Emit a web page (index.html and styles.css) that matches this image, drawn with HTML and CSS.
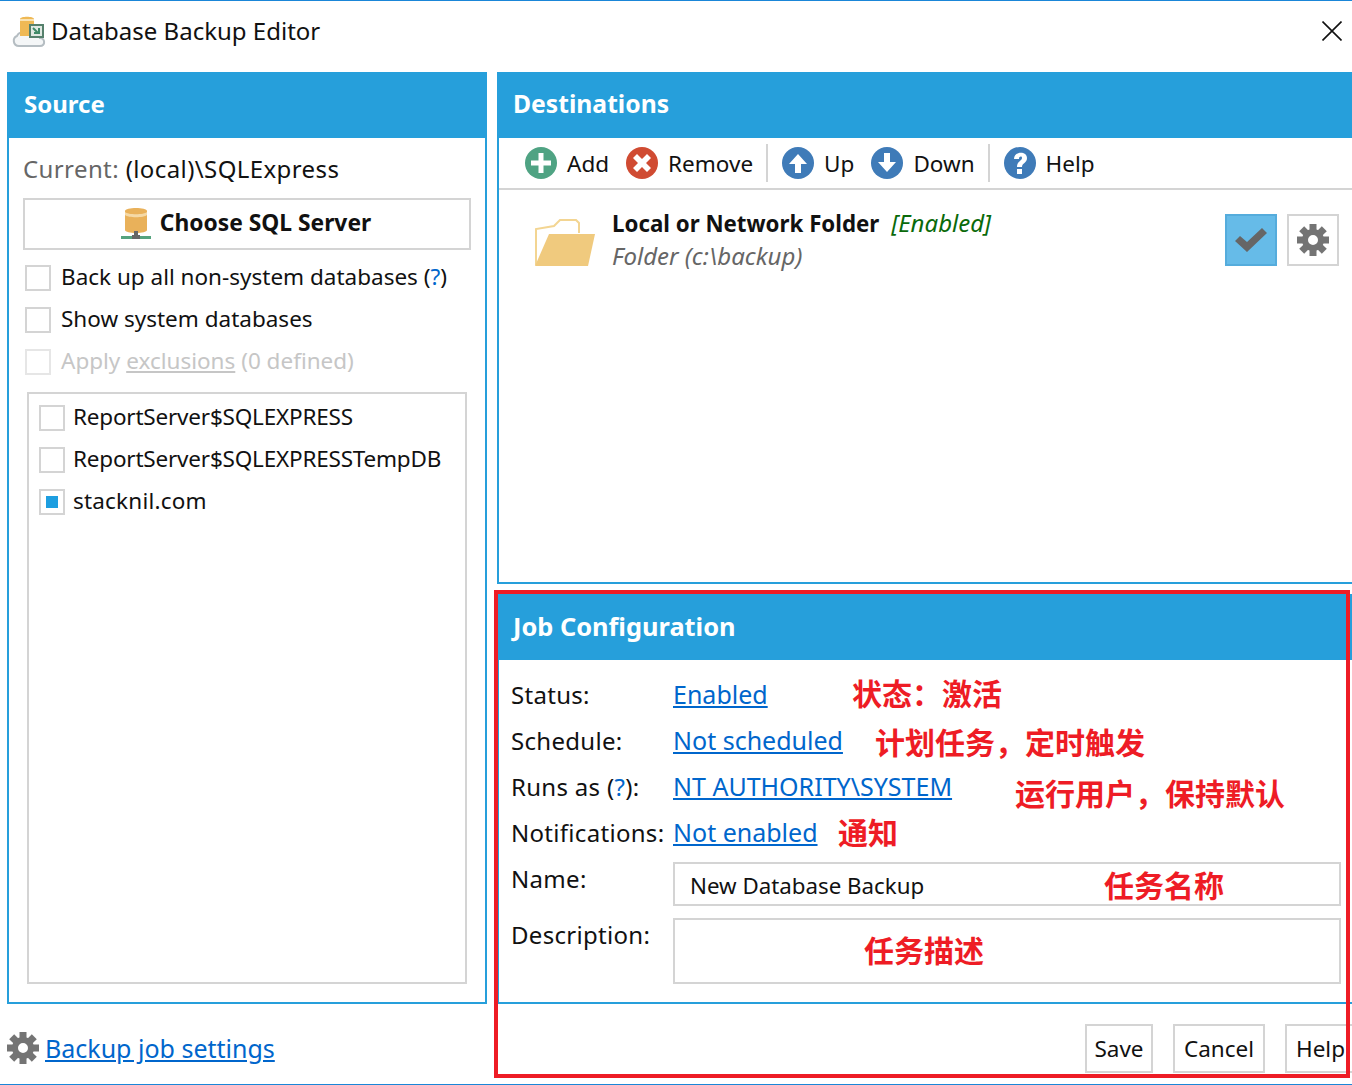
FILE: index.html
```html
<!doctype html>
<html lang="en">
<head>
  <meta charset="utf-8">
  <title>Database Backup Editor</title>
  <link rel="stylesheet" href="styles.css">
</head>
<body>
  <svg class="defs" width="0" height="0">
    <symbol id="gear" viewBox="0 0 32 32">
      <circle cx="16" cy="16" r="8" fill="none" stroke="currentColor" stroke-width="6"/>
      <rect x="12.500" y="0" width="7" height="7" fill="currentColor"/>
      <rect x="12.500" y="25" width="7" height="7" fill="currentColor"/>
      <rect x="0" y="12.500" width="7" height="7" fill="currentColor"/>
      <rect x="25" y="12.500" width="7" height="7" fill="currentColor"/>
      <rect x="12.500" y="0" width="7" height="7" fill="currentColor" transform="rotate(45 16 16)"/>
      <rect x="12.500" y="25" width="7" height="7" fill="currentColor" transform="rotate(45 16 16)"/>
      <rect x="0" y="12.500" width="7" height="7" fill="currentColor" transform="rotate(45 16 16)"/>
      <rect x="25" y="12.500" width="7" height="7" fill="currentColor" transform="rotate(45 16 16)"/>
    </symbol>
    <symbol id="db" viewBox="0 0 30 34">
      <path fill="#e9b15a" d="M4 4c0-4 22-4 22 0v19c0 4-22 4-22 0z"/>
      <path fill="#f5d9a6" d="M4 5c3 3 19 3 22 0v3c-3 3-19 3-22 0z"/>
      <rect x="13" y="24" width="4" height="6" fill="#666"/>
      <rect x="0" y="29" width="30" height="3" fill="#55a37e"/>
      <rect x="11" y="28" width="8" height="4" fill="#666"/>
    </symbol>
  </svg>

  <div class="window">
    <header class="titlebar">
      <svg class="app-icon" viewBox="0 0 34 32">
        <path fill="#f4f6f7" stroke="#b5bdc2" stroke-width="2" d="M7 30C1 30 0 22 5 20 7 15 15 15 18 18 23 16 28 18 28 22 33 22 34 30 28 30z"/>
        <path fill="#efb955" d="M8 3c0-3 14-3 14 0v17H8z"/>
        <rect x="8" y="3" width="14" height="2" fill="#f9e3b4"/>
        <rect x="18" y="9" width="13" height="12" fill="#dfe8e2" stroke="#55806c" stroke-width="2"/>
        <path fill="none" stroke="#3f8a68" stroke-width="2" d="M21 12l5 5M27 12v5h-5"/>
      </svg>
      <span class="app-title">Database Backup Editor</span>
      <svg class="close" viewBox="0 0 20 20"><path fill="none" stroke="#111" stroke-width="1.600" d="M0.500 0.500l19 19M19.500 0.500l-19 19"/></svg>
    </header>

    <div class="columns">
      <section class="panel source">
        <h2 class="panel-head">Source</h2>
        <div class="source-body">
          <div class="current"><span class="muted">Current:</span> (local)\SQLExpress</div>
          <button class="choose"><svg class="choose-icon"><use href="#db"/></svg>Choose SQL Server</button>
          <label class="check-row"><span class="box"></span>Back up all non-system databases (<span class="hint">?</span>)</label>
          <label class="check-row"><span class="box"></span>Show system databases</label>
          <label class="check-row disabled"><span class="box"></span>Apply&nbsp;<u>exclusions</u>&nbsp;(0 defined)</label>
          <div class="db-list">
            <label class="check-row caps"><span class="box"></span>ReportServer$SQLEXPRESS</label>
            <label class="check-row caps"><span class="box"></span>ReportServer$SQLEXPRESSTempDB</label>
            <label class="check-row wide"><span class="box on"></span>stacknil.com</label>
          </div>
        </div>
      </section>

      <div class="right">
        <section class="panel destinations">
          <h2 class="panel-head">Destinations</h2>
          <div class="toolbar">
            <span class="tool">
              <svg viewBox="0 0 32 32"><circle cx="16" cy="16" r="16" fill="#4fa383"/><path fill="#fff" d="M13.500 6h5v7.500H26v5h-7.500V26h-5v-7.500H6v-5h7.500z"/></svg>Add
            </span>
            <span class="tool">
              <svg viewBox="0 0 32 32"><circle cx="16" cy="16" r="16" fill="#d04b32"/><path fill="#fff" d="M11 7l5 5 5-5 4 4-5 5 5 5-4 4-5-5-5 5-4-4 5-5-5-5z"/></svg>Remove
            </span>
            <span class="tool-sep"></span>
            <span class="tool">
              <svg viewBox="0 0 32 32"><circle cx="16" cy="16" r="16" fill="#3f7bb8"/><path fill="#fff" d="M16 7l9 10h-6v9h-6v-9H7z"/></svg>Up
            </span>
            <span class="tool">
              <svg viewBox="0 0 32 32"><circle cx="16" cy="16" r="16" fill="#3f7bb8"/><path fill="#fff" d="M16 25l-9-10h6V6h6v9h6z"/></svg>Down
            </span>
            <span class="tool-sep"></span>
            <span class="tool">
              <svg viewBox="0 0 32 32"><circle cx="16" cy="16" r="16" fill="#3f7bb8"/><path fill="#fff" d="M10 12c0-8 13-8 13-1 0 5-5 5-5 9h-5c0-6 5-6 5-9 0-2-3-2-3 1zM13 22h5v5h-5z"/></svg>Help
            </span>
          </div>
          <div class="dest-row">
            <svg class="folder" viewBox="0 0 60 48">
              <path fill="none" stroke="#f3d592" stroke-width="2" d="M1 47V11l18-3 6-6h16l3 3v10"/>
              <path fill="#f0ca7e" d="M14 16h46l-7 32H0z"/>
            </svg>
            <div class="dest-text">
              <div><b>Local or Network Folder</b><i class="enabled">[Enabled]</i></div>
              <i class="dest-sub">Folder (c:\backup)</i>
            </div>
            <span class="square checked">
              <svg viewBox="0 0 32 24"><path fill="#666" d="M0 13l5-5 7 6L27 0l5 5-20 19z"/></svg>
            </span>
            <span class="square">
              <svg class="gear"><use href="#gear"/></svg>
            </span>
          </div>
        </section>

        <section class="panel job">
          <h2 class="panel-head">Job Configuration</h2>
          <div class="job-grid">
            <div class="job-label">Status:</div><div class="job-value"><a href="#">Enabled</a></div>
            <div class="job-label">Schedule:</div><div class="job-value"><a href="#">Not scheduled</a></div>
            <div class="job-label">Runs as (<span class="hint">?</span>):</div><div class="job-value"><a href="#">NT AUTHORITY\SYSTEM</a></div>
            <div class="job-label">Notifications:</div><div class="job-value"><a href="#">Not enabled</a></div>
            <div class="job-label field-label">Name:</div><div class="field name">New Database Backup</div>
            <div class="job-label field-label">Description:</div><div class="field desc"></div>
          </div>
        </section>
      </div>
    </div>

    <footer class="bottom">
      <div class="settings">
        <svg class="gear"><use href="#gear"/></svg>
        <a href="#">Backup job settings</a>
      </div>
      <div class="actions">
        <button class="btn save">Save</button>
        <button class="btn cancel">Cancel</button>
        <button class="btn help">Help</button>
      </div>
    </footer>

    <!-- red markup painted over the screenshot -->
    <div class="mark-box"></div>
    <span class="note n1">状态：激活</span>
    <span class="note n2">计划任务，定时触发</span>
    <span class="note n3">运行用户，保持默认</span>
    <span class="note n4">通知</span>
    <span class="note n5">任务名称</span>
    <span class="note n6">任务描述</span>
  </div>
</body>
</html>
```

FILE: styles.css
```css
* {
  box-sizing: border-box;
}

html, body {
  margin: 0;
  overflow: hidden;
}

body {
  background: #fff;
  color: #111;
  font-family: "Noto Sans", "Noto Sans CJK SC", sans-serif;
  font-size: 24px;
}

.defs {
  position: absolute;
}

.window {
  position: relative;
  width: 1352px;
  height: 1085px;
  overflow: hidden;
  border-top: 1px solid #1a86d8;
  border-bottom: 1px solid #1a86d8;
}

.titlebar {
  display: flex;
  align-items: center;
  height: 71px;
  padding: 0 10px 12px 12px;
}

.app-icon {
  width: 34px;
  height: 32px;
  margin: 3px 5px 0 0;
}

.app-title {
  font-size: 24px;
}

.close {
  width: 20px;
  height: 20px;
  margin-left: auto;
}

.columns {
  display: flex;
  gap: 10px;
  height: 932px;
  padding-left: 7px;
}

.panel {
  display: flex;
  flex-direction: column;
  border: 2px solid #269fdb;
}

.panel-head {
  height: 66px;
  margin: -2px -2px 0;
  padding-left: 17px;
  background: #269fdb;
  color: #fff;
  font-size: 24.700px;
  font-weight: 700;
  line-height: 64px;
}

.source {
  width: 480px;
}

.source .panel-head {
  font-size: 24px;
}

.job .panel-head {
  padding-left: 16px;
  font-size: 25.400px;
}

.source-body {
  display: flex;
  flex-direction: column;
  flex: 1;
  padding: 13px 14px 18px;
  font-size: 22.500px;
}

.current {
  height: 47px;
  line-height: 36px;
  font-size: 24px;
  letter-spacing: 0.400px;
}

.muted {
  color: #666;
}

.choose {
  display: flex;
  align-items: center;
  justify-content: center;
  flex: none;
  height: 52px;
  border: 2px solid #d4d4d4;
  padding: 0 2px 4px 0;
  background: #fff;
  color: #111;
  font: 700 22.800px "Noto Sans", sans-serif;
}

.choose-icon {
  width: 30px;
  height: 36px;
  margin: 4px 9px 0 0;
}

.check-row {
  display: flex;
  align-items: center;
  height: 42px;
  padding-bottom: 4px;
  white-space: nowrap;
}

.source-body > .check-row {
  margin-left: 2px;
  position: relative;
  top: 7px;
}

.box {
  flex: none;
  width: 26px;
  height: 26px;
  margin-top: 4px;
  margin-right: 10px;
  border: 2px solid #d4d4d4;
  background: #fff;
}

.db-list .box {
  margin-right: 8px;
}

.caps {
  letter-spacing: -0.200px;
}

.wide {
  letter-spacing: 0.200px;
}

.box.on {
  padding: 5px;
}

.box.on::before {
  content: "";
  display: block;
  width: 12px;
  height: 12px;
  background: #1d9ee0;
}

.disabled {
  color: #c6c6c6;
}

.disabled .box {
  border-color: #e6e6e6;
}

.hint {
  color: #0066cc;
}

.db-list {
  flex: 1;
  margin: 16px 4px 0;
  padding: 3px 10px;
  border: 2px solid #d4d4d4;
}

.right {
  display: flex;
  flex-direction: column;
  flex: 1;
  gap: 10px;
  min-width: 0;
}

.destinations {
  height: 512px;
  border-right: 0;
}

.destinations .panel-head {
  padding-left: 16px;
}

.toolbar {
  display: flex;
  align-items: center;
  height: 52px;
  padding: 0 0 0 26px;
  border-bottom: 2px solid #d4d4d4;
  font-size: 22.500px;
}

.tool {
  display: flex;
  align-items: center;
  margin-right: 17px;
}

.tool svg {
  width: 32px;
  height: 32px;
  margin-right: 10px;
}

.tool-sep {
  width: 2px;
  height: 38px;
  margin-right: 14px;
  margin-left: -4px;
  background: #d4d4d4;
}

.dest-row {
  display: flex;
  align-items: flex-start;
  padding: 17px 13px 0 36px;
}

.folder {
  width: 60px;
  height: 48px;
  margin: 11px 17px 0 0;
}

.dest-text {
  flex: 1;
  line-height: 32px;
  white-space: nowrap;
}

.dest-text b {
  font-size: 22.300px;
}

.enabled {
  margin-left: 12px;
  color: #0a6a0a;
}

.dest-sub {
  color: #666;
}

.square {
  display: flex;
  align-items: center;
  justify-content: center;
  width: 52px;
  height: 52px;
  margin: 7px 0 0 10px;
  border: 2px solid #d4d4d4;
}

.square.checked {
  border-color: #55acdc;
  background: #66bbe8;
}

.square.checked svg {
  width: 32px;
  height: 24px;
}

.gear {
  flex: none;
  width: 32px;
  height: 32px;
  color: #747474;
}

.job {
  flex: 1;
  border-right: 0;
}

.job-grid {
  display: grid;
  grid-template-columns: 162px 668px;
  grid-template-rows: repeat(4, 46px) 56px 73px;
  padding: 11px 0 0 12px;
}

.job-label, .job-value {
  display: flex;
  align-items: center;
  white-space: nowrap;
}

.job-label {
  letter-spacing: 0.300px;
}

.job-value {
  font-size: 25px;
}

.field-label {
  align-items: flex-start;
  margin-top: 7px;
}

a {
  color: #0066cc;
}

.field {
  margin-top: 7px;
  border: 2px solid #d4d4d4;
}

.name {
  height: 44px;
  padding-left: 15px;
  font-size: 22.300px;
  line-height: 44px;
}

.bottom {
  display: flex;
  justify-content: space-between;
  align-items: flex-start;
}

.settings {
  display: flex;
  align-items: center;
  gap: 6px;
  height: 80px;
  padding: 8px 0 0 7px;
  font-size: 25px;
}

.actions {
  display: flex;
  gap: 20px;
  flex: none;
  width: 267px;
  padding-top: 20px;
}

.btn {
  flex: none;
  height: 49px;
  border: 2px solid #d4d4d4;
  background: #fff;
  color: #111;
  font: 22.500px "Noto Sans", sans-serif;
}

.save {
  width: 68px;
}

.cancel {
  width: 92px;
}

.help {
  width: 80px;
  padding: 0 0 0 9px;
  text-align: left;
}

.mark-box {
  position: absolute;
  left: 494px;
  top: 589px;
  width: 856px;
  height: 488px;
  border: 4px solid #ee1c25;
}

.note {
  position: absolute;
  color: #ee1c25;
  font-family: "Noto Sans CJK SC", sans-serif;
  font-size: 30px;
  font-weight: 700;
  line-height: 40px;
  white-space: nowrap;
}

.n1 { left: 852px; top: 671px; }
.n2 { left: 875px; top: 720px; }
.n3 { left: 1015px; top: 771px; }
.n4 { left: 838px; top: 810px; }
.n5 { left: 1104px; top: 863px; }
.n6 { left: 864px; top: 928px; }
```
